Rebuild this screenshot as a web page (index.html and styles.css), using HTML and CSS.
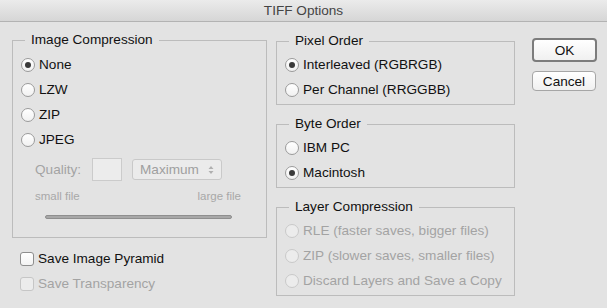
FILE: index.html
```html
<!DOCTYPE html>
<html lang="en">
<head>
<meta charset="UTF-8">
<title>TIFF Options</title>
<link rel="stylesheet" href="styles.css">
</head>
<body>

<div class="dialog">
  <div class="titlebar">TIFF Options</div>

  <div class="content">
    <!-- left column -->
    <div class="col-left">
      <fieldset class="group group-compression">
        <legend>Image Compression</legend>
        <div class="opt"><span class="radio on"></span>None</div>
        <div class="opt"><span class="radio"></span>LZW</div>
        <div class="opt"><span class="radio"></span>ZIP</div>
        <div class="opt"><span class="radio"></span>JPEG</div>

        <div class="quality">
          <span class="quality-label">Quality:</span>
          <span class="quality-input"></span>
          <span class="quality-select">Maximum
            <svg class="arrows" width="6" height="10" viewBox="0 0 6 10">
              <path d="M0.5 4 L3 1 L5.5 4 Z M0.5 6 L3 9 L5.5 6 Z"/>
            </svg>
          </span>
        </div>
        <div class="file-labels">
          <span>small file</span>
          <span>large file</span>
        </div>
        <div class="slider"></div>
      </fieldset>

      <div class="checks">
        <div class="opt"><span class="checkbox"></span>Save Image Pyramid</div>
        <div class="opt disabled"><span class="checkbox"></span>Save Transparency</div>
      </div>
    </div>

    <!-- middle column -->
    <div class="col-mid">
      <fieldset class="group">
        <legend>Pixel Order</legend>
        <div class="opt"><span class="radio on"></span>Interleaved (RGBRGB)</div>
        <div class="opt"><span class="radio"></span>Per Channel (RRGGBB)</div>
      </fieldset>

      <fieldset class="group">
        <legend>Byte Order</legend>
        <div class="opt"><span class="radio"></span>IBM PC</div>
        <div class="opt"><span class="radio on"></span>Macintosh</div>
      </fieldset>

      <fieldset class="group">
        <legend>Layer Compression</legend>
        <div class="opt disabled"><span class="radio"></span>RLE (faster saves, bigger files)</div>
        <div class="opt disabled"><span class="radio"></span>ZIP (slower saves, smaller files)</div>
        <div class="opt disabled"><span class="radio"></span>Discard Layers and Save a Copy</div>
      </fieldset>
    </div>

    <!-- buttons -->
    <div class="col-buttons">
      <button class="btn btn-default">OK</button>
      <button class="btn">Cancel</button>
    </div>
  </div>
</div>

</body>
</html>
```

FILE: styles.css
```css
body {
  margin: 0;
  font-family: "Liberation Sans", Arial, sans-serif;
  font-size: 13.6px;
  color: #111;
}
.dialog {
  width: 607px;
  height: 308px;
  background-color: #e3e3e3;
  overflow: hidden;
}
.titlebar {
  height: 21px;
  line-height: 22px;
  text-align: center;
  color: #444;
  background: linear-gradient(#ebebeb, #d6d6d6);
  border-bottom: 1px solid #b3b3b3;
}
.content {
  display: flex;
  padding: 10px 0 0 12px;
}
.col-left {
  width: 255px;
}
.col-mid {
  width: 239px;
  margin-left: 9px;
  padding-top: 1px;
}
.col-buttons {
  display: flex;
  flex-direction: column;
  align-items: flex-start;
  margin-left: 17px;
  padding-top: 6px;
}

/* group boxes */
.group {
  margin: 0;
  padding: 3px 0 2px 8px;
  border: 1px solid #bcbcbc;
  min-width: 0;
}
.group + .group {
  margin-top: 11px;
}
.group legend {
  margin-left: 4px;
  padding: 0 6px;
  line-height: 16px;
  color: #111;
}
.group-compression {
  padding-top: 4px;
  padding-bottom: 18px;
}

/* option rows */
.opt {
  display: flex;
  align-items: center;
  height: 25px;
  white-space: nowrap;
}
.opt.disabled {
  color: #a3a3a3;
}
.radio {
  box-sizing: border-box;
  width: 14px;
  height: 14px;
  margin-right: 4px;
  border: 1px solid #9b9b9b;
  border-radius: 50%;
  background: linear-gradient(#ffffff, #f1f1f1);
  display: flex;
  align-items: center;
  justify-content: center;
}
.radio.on::after {
  content: "";
  width: 6px;
  height: 6px;
  border-radius: 50%;
  background-color: #3a3a3a;
}
.disabled .radio {
  border-color: #c9c9c9;
  background: #ececec;
}
.checkbox {
  box-sizing: border-box;
  width: 14px;
  height: 14px;
  margin-right: 4px;
  border: 1px solid #8e8e8e;
  border-radius: 3px;
  background: linear-gradient(#ffffff, #f3f3f3);
}
.disabled .checkbox {
  border-color: #c6c6c6;
  background: #ececec;
}

/* quality controls */
.quality {
  display: flex;
  align-items: center;
  height: 23px;
  margin-top: 6px;
  padding-left: 14px;
  color: #a3a3a3;
}
.quality-label {
  width: 57px;
}
.quality-input {
  box-sizing: border-box;
  width: 30px;
  height: 23px;
  border: 1px solid #cbcbcb;
  background-color: #ececec;
}
.quality-select {
  box-sizing: border-box;
  display: flex;
  justify-content: space-between;
  align-items: center;
  width: 90px;
  height: 21px;
  margin-left: 10px;
  padding: 0 7px 0 7px;
  border: 1px solid #c9c9c9;
  border-radius: 3px;
  background-color: #ebebeb;
  color: #9f9f9f;
}
.arrows {
  fill: #b0b0b0;
}
.file-labels {
  display: flex;
  justify-content: space-between;
  width: 206px;
  margin: 9px 0 0 14px;
  font-size: 11.5px;
  line-height: 13px;
  color: #a8a8a8;
}
.slider {
  box-sizing: border-box;
  width: 187px;
  height: 4px;
  margin: 12px 0 0 24px;
  border: 1px solid #8f8f8f;
  border-radius: 2px;
  background-color: #a8a8a8;
}

.checks {
  margin-top: 8px;
  padding-left: 8px;
}

/* buttons */
.btn {
  box-sizing: border-box;
  font-family: inherit;
  font-size: 13.6px;
  color: #111;
  padding: 0;
  border: 1px solid #a6a6a6;
  border-radius: 4px;
  background: linear-gradient(#ffffff, #f0f0f0);
  width: 64px;
  height: 20px;
  margin-top: 9px;
}
.btn-default {
  width: 65px;
  height: 24px;
  margin-top: 0;
  border: 2px solid #7c7c7c;
}
```
